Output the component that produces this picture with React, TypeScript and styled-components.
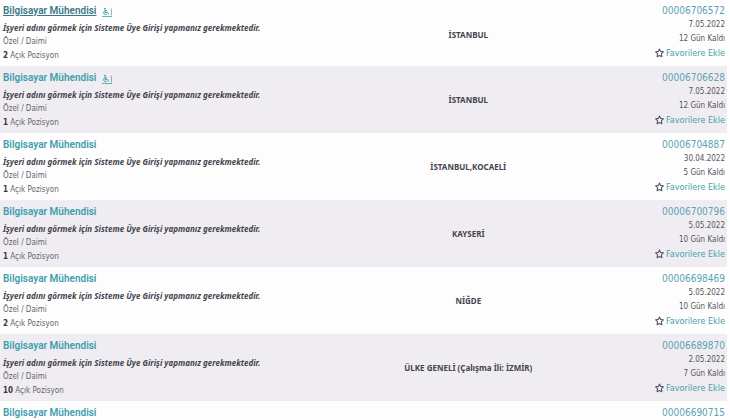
import React from "react";
import styled, { createGlobalStyle } from "styled-components";

const GlobalStyle = createGlobalStyle`
  body {
    margin: 0;
    background: #fefdfe;
    color: #4a4850;
    font-family: "DejaVu Sans Condensed", "DejaVu Sans", sans-serif;
    font-size: 8px;
    line-height: 14px;
    overflow: hidden;
  }
`;

const Page = styled.main`
  height: 100vh;
  overflow: hidden;
  padding-right: 3px;
`;

const Listings = styled.table`
  width: 100%;
  table-layout: fixed;
  border-collapse: collapse;
`;

const ListingRow = styled.tr`
  &:nth-child(even) {
    background: #efedf1;
  }
  &:first-child > td {
    padding-top: 3px;
  }
`;

const JobCell = styled.td`
  width: 39%;
  padding: 4px 0 3px 3px;
  vertical-align: top;
  white-space: nowrap;
`;

const CityCell = styled.td`
  width: 50%;
  padding: 0;
  text-align: center;
  vertical-align: middle;
  font-family: "Noto Sans", sans-serif;
  font-weight: 700;
  color: #45434d;
`;

const MetaCell = styled.td`
  padding: 4px 2px 3px 0;
  vertical-align: top;
  text-align: right;
  white-space: nowrap;
`;

const TitleLine = styled.div`
  display: flex;
  align-items: center;
  gap: 6px;
  height: 16px;
  margin-bottom: 2px;
`;

const TitleLink = styled.a<{ $active?: boolean }>`
  font-family: Roboto, sans-serif;
  font-size: 10px;
  line-height: 16px;
  font-weight: 600;
  color: ${(p) => (p.$active ? "#3a7886" : "#409dad")};
  text-decoration: ${(p) => (p.$active ? "underline" : "none")};
`;

const AccessLink = styled.a`
  display: flex;
  color: #3f9fae;
`;

const Notice = styled.div`
  font-family: "Noto Sans", sans-serif;
  font-weight: 700;
  font-style: italic;
  color: #45434d;
`;

const Detail = styled.div`
  color: #66646c;
`;

const Count = styled.strong`
  color: #3b3942;
`;

const IdLink = styled.a`
  display: block;
  font-size: 10px;
  line-height: 15px;
  color: #5aa3b1;
  text-decoration: none;
`;

const MetaLine = styled.div`
  color: #56545d;
`;

const FavoriteButton = styled.button`
  display: inline-flex;
  align-items: center;
  gap: 2px;
  height: 14px;
  padding: 0;
  border: 0;
  background: none;
  vertical-align: top;
  font: inherit;
  font-size: 9px;
  line-height: 14px;
  color: #4a9dad;
  cursor: pointer;
`;

const AccessIcon = () => (
  <svg width="10" height="11" viewBox="0 0 10 11" fill="none" stroke="currentColor" aria-hidden="true">
    <circle cx="3" cy="2.6" r="0.9" fill="currentColor" stroke="none" />
    <path d="M3 3.4V6.4h2.6l1 2M3 4.8h2M2.2 5.4a1.9 1.9 0 1 0 2.8 2.6" />
    <path d="M0 10.5h10" strokeWidth="0.8" />
    <path d="M9.4 2.5v7" stroke="#6b8790" strokeWidth="0.7" />
  </svg>
);

const StarIcon = () => (
  <svg width="9" height="10" viewBox="0 0 9 10" fill="none" stroke="#5a5862" strokeWidth="1.1" strokeLinejoin="round" aria-hidden="true">
    <path d="M4.5 1l1.2 2.4 2.7.4-2 1.9.5 3-2.4-1.3-2.4 1.3.5-3-2-1.9 2.7-.4z" />
  </svg>
);

interface Job {
  id: string;
  city: string;
  date: string;
  days: number;
  positions: number;
  accessible?: boolean;
  active?: boolean;
}

const jobs: Job[] = [
  { id: "00006706572", city: "İSTANBUL", date: "7.05.2022", days: 12, positions: 2, accessible: true, active: true },
  { id: "00006706628", city: "İSTANBUL", date: "7.05.2022", days: 12, positions: 1, accessible: true },
  { id: "00006704887", city: "İSTANBUL,KOCAELİ", date: "30.04.2022", days: 5, positions: 1 },
  { id: "00006700796", city: "KAYSERİ", date: "5.05.2022", days: 10, positions: 1 },
  { id: "00006698469", city: "NİĞDE", date: "5.05.2022", days: 10, positions: 2 },
  { id: "00006689870", city: "ÜLKE GENELİ (Çalışma İli: İZMİR)", date: "2.05.2022", days: 7, positions: 10 },
  { id: "00006690715", city: "", date: "", days: 0, positions: 0 },
];

const Listing = ({ job }: { job: Job }) => (
  <ListingRow>
    <JobCell>
      <TitleLine>
        <TitleLink href="#" $active={job.active}>Bilgisayar Mühendisi</TitleLink>
        {job.accessible && (
          <AccessLink href="#" aria-label="Engelli">
            <AccessIcon />
          </AccessLink>
        )}
      </TitleLine>
      {job.date && (
        <>
          <Notice>İşyeri adını görmek için Sisteme Üye Girişi yapmanız gerekmektedir.</Notice>
          <Detail>Özel / Daimi</Detail>
          <Detail>
            <Count>{job.positions}</Count> Açık Pozisyon
          </Detail>
        </>
      )}
    </JobCell>
    <CityCell>{job.city}</CityCell>
    <MetaCell>
      <IdLink href="#">{job.id}</IdLink>
      {job.date && (
        <>
          <MetaLine>{job.date}</MetaLine>
          <MetaLine>{job.days} Gün Kaldı</MetaLine>
          <FavoriteButton type="button">
            <StarIcon />
            Favorilere Ekle
          </FavoriteButton>
        </>
      )}
    </MetaCell>
  </ListingRow>
);

export default function App() {
  return (
    <>
      <GlobalStyle />
      <Page>
        <Listings>
          <tbody>
            {jobs.map((job) => (
              <Listing key={job.id} job={job} />
            ))}
          </tbody>
        </Listings>
      </Page>
    </>
  );
}
